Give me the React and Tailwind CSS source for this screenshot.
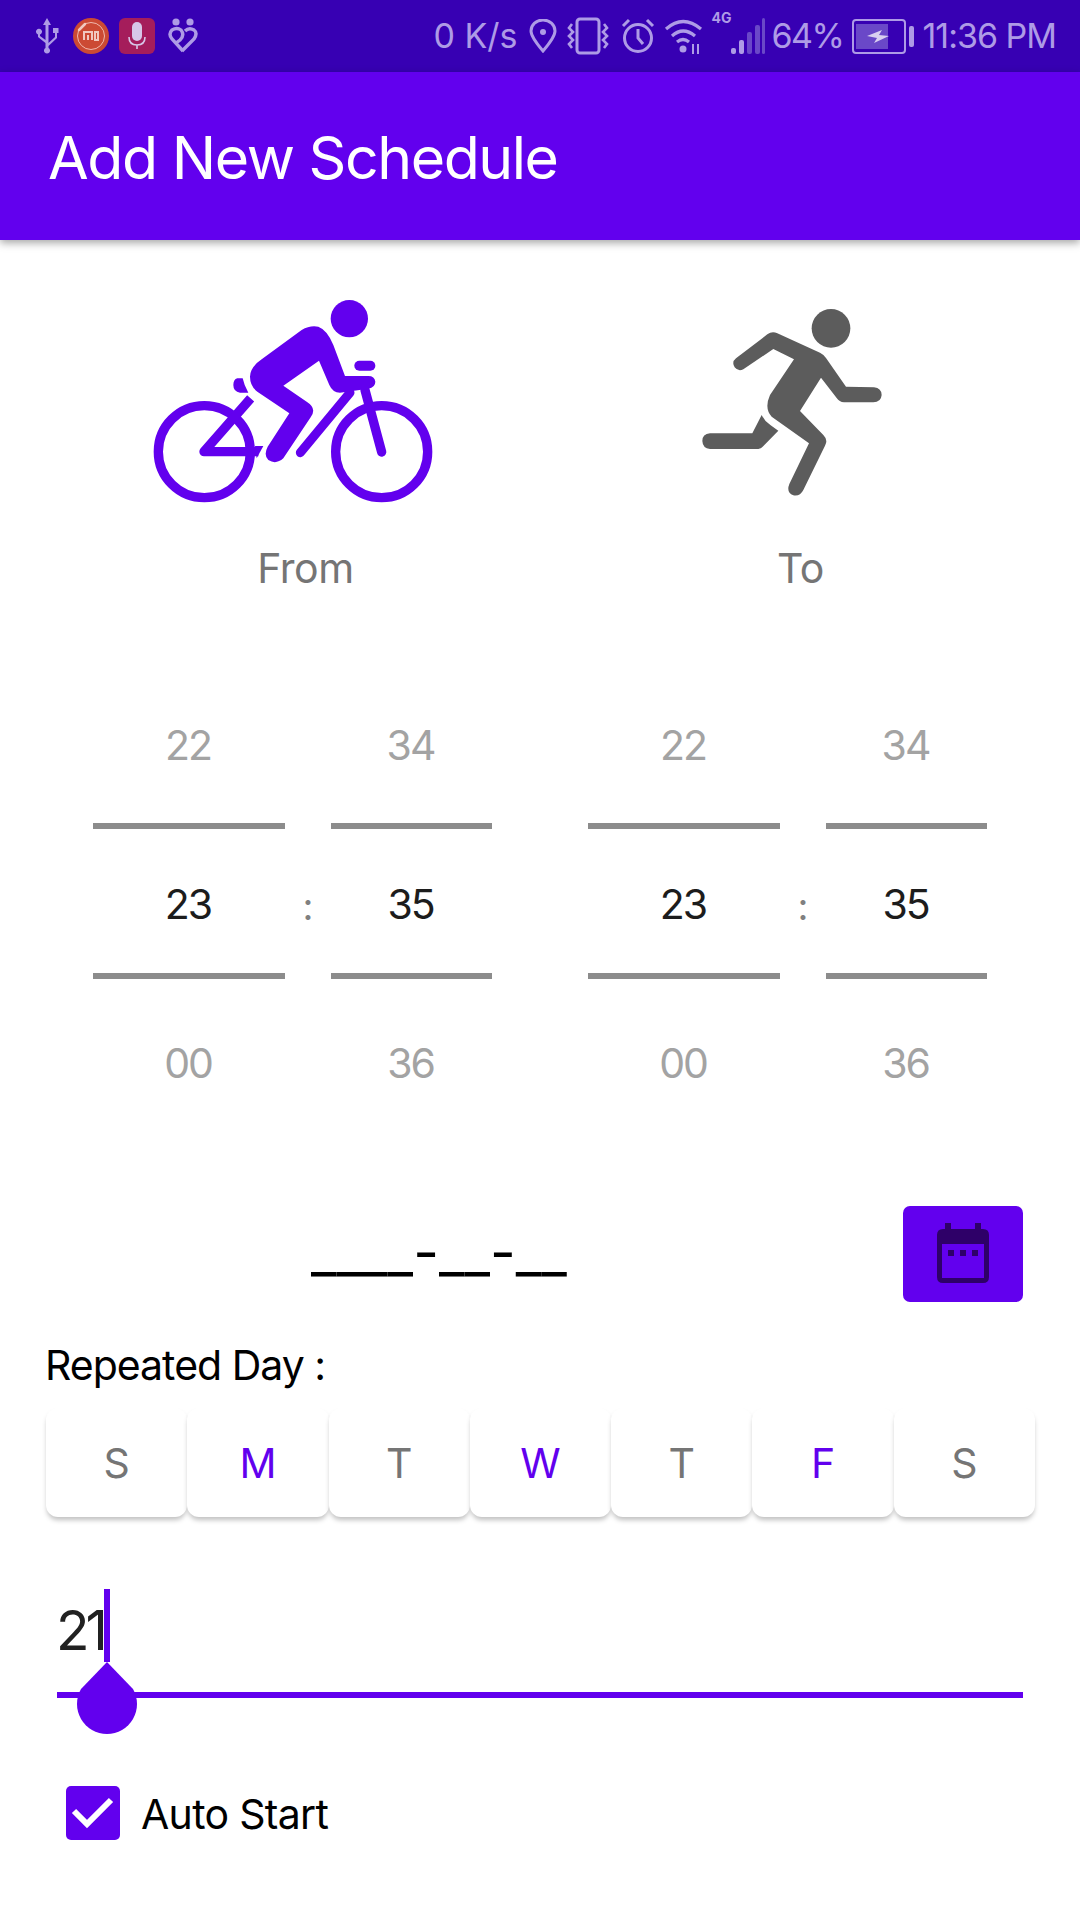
import React from 'react'

const PURPLE = '#6200ee'

function BikeIcon() {
  return (
    <svg width="340" height="260" viewBox="0 0 1020 780" className="block">
      <g fill="none" stroke={PURPLE} strokeLinecap="round" strokeLinejoin="round">
        <circle cx="253" cy="545" r="138" strokeWidth="28" />
        <circle cx="785" cy="545" r="138" strokeWidth="28" />
        <path d="M392 385 L252 545 H415" strokeWidth="28" strokeLinecap="butt" />
        <path d="M690 368 L541 548" strokeWidth="27" />
        <path d="M735 360 L785 546" strokeWidth="28" />
      </g>
      <path d="M352 325 H368 Q372 345 385 368 L372 368 H360 Q340 365 340 345 Q340 328 352 325 Z" fill={PURPLE} />
      <path d="M405 528 H430 L410 565 Z" fill={PURPLE} />
      <circle cx="688" cy="146" r="56" fill={PURPLE} />
      <rect x="703" y="272" width="63" height="30" rx="15" fill={PURPLE} />
      <path
        d="M545 180 L425 268 Q390 292 390 320 Q390 348 412 365 L508 430 L443 530 Q430 555 445 570 Q468 585 490 565 L572 442 Q592 415 560 395 L490 347 L597 272 L628 345 Q638 368 660 368 L745 356 Q766 352 766 335 Q764 318 745 318 L675 318 L640 225 Q622 180 595 170 Q570 165 545 180 Z"
        fill={PURPLE}
      />
    </svg>
  )
}

function RunIcon() {
  return (
    <svg width="260" height="240" viewBox="0 0 780 720" className="block" fill="#5c5c5c">
      <circle cx="513" cy="145" r="58" />
      <path d="M228 235 L322 163 Q336 153 352 160 L480 218 Q492 224 498 234 L558 320 L642 322 Q665 325 665 345 Q663 367 640 367 L552 367 Q538 366 530 354 L483 293 L420 393 L490 465 Q505 480 495 497 L430 630 Q420 650 400 646 Q378 638 388 612 L447 490 L335 410 Q312 385 330 345 L402 238 L340 207 L250 268 Q235 276 224 262 Q214 246 228 235 Z" />
      <path d="M305 405 L277 460 L150 460 Q127 462 127 483 Q128 505 150 507 L295 507 Q303 506 308 500 L355 452 L332 436 Q314 424 305 405 Z" />
    </svg>
  )
}

function CalendarIcon() {
  return (
    <svg width="54" height="62" viewBox="0 0 54 62" className="block">
      <path
        fillRule="evenodd"
        fill="#2e0068"
        d="M9 0 H15 V6 H39 V0 H45 V6 H47 Q53 6 53 12 V54 Q53 60 47 60 H7 Q1 60 1 54 V12 Q1 6 7 6 H9 Z M6 21 V55 H48 V21 Z"
      />
      <rect x="12" y="27" width="6" height="6" fill="#2e0068" />
      <rect x="24" y="27" width="6" height="6" fill="#2e0068" />
      <rect x="36" y="27" width="6" height="6" fill="#2e0068" />
    </svg>
  )
}

function LeftStatusIcons() {
  const c = '#ae9be6'
  return (
    <div className="flex items-center">
      <svg width="24" height="36" viewBox="0 0 24 36" className="ml-[35px]" fill={c}>
        <path d="M12 0 L16 7 H13.5 V25 L20 19 V15 H18 V10 H23.5 V15 H22 V20 L13.5 28 V30 A3 3 0 1 1 10.5 30 V25 L3 19 V16.5 A3 3 0 1 1 5 16.5 V18 L10.5 22 V7 H8 Z" />
      </svg>
      <svg width="36" height="36" viewBox="0 0 36 36" className="ml-[14px]">
        <circle cx="18" cy="18" r="18" fill="#cc4a33" />
        <circle cx="18" cy="18" r="13.5" fill="none" stroke="#f0b9ad" strokeWidth="1" />
        <path d="M6 12 L12 6" stroke="#f0c8bf" strokeWidth="2.5" strokeLinecap="round" />
        <path d="M11 22 V14 H19 V22 M15 17 V22 M22 14 H25 V22 H22 Z" fill="none" stroke="#f0c8bf" strokeWidth="2" />
      </svg>
      <svg width="36" height="36" viewBox="0 0 36 36" className="ml-[10px]">
        <rect width="36" height="36" rx="6" fill="#a51d5b" />
        <rect x="13" y="4" width="10" height="19" rx="5" fill="#d7c6e8" />
        <path d="M10 19 Q10 27 18 27 Q26 27 26 19 M18 27 V31" fill="none" stroke="#d7c6e8" strokeWidth="1.6" />
      </svg>
      <svg width="30" height="36" viewBox="0 0 30 36" className="ml-[13px]" fill="none" stroke={c} strokeWidth="3.4">
        <circle cx="8" cy="4" r="3.6" fill={c} stroke="none" />
        <circle cx="22" cy="4" r="3.6" fill={c} stroke="none" />
        <path d="M15 33 L4 21 Q0 16 4 12 Q9 9 13 12 Q17 17 12 22 L8 25" />
        <path d="M14 33 L26 21 Q30 15 26 12 Q21 9 17 13" />
      </svg>
    </div>
  )
}

function RightStatus() {
  const c = '#ae9be6'
  return (
    <div className="flex items-center text-[#ae9be6] text-[34px] leading-none mr-[24px]">
      <span>0 K/s</span>
      <svg width="28" height="34" viewBox="0 0 28 34" className="ml-[11px]" fill="none" stroke={c} strokeWidth="3">
        <path d="M14 32 Q2 18 2 12 A12 11 0 0 1 26 12 Q26 18 14 32 Z" />
        <circle cx="14" cy="13" r="3" fill={c} stroke="none" />
      </svg>
      <svg width="42" height="38" viewBox="0 0 42 38" className="ml-[10px]" fill="none" stroke={c} strokeWidth="2.6">
        <rect x="10" y="2" width="22" height="34" rx="3" strokeWidth="3" />
        <path d="M5 7 L2 11 L6 15 L2 19 L6 23 L2 27 L5 31 M37 7 L40 11 L36 15 L40 19 L36 23 L40 27 L37 31" />
      </svg>
      <svg width="34" height="36" viewBox="0 0 34 36" className="ml-[12px]" fill="none" stroke={c} strokeWidth="3">
        <circle cx="17" cy="20" r="13.5" />
        <path d="M17 11 V20 L22 26 M2 8 L8 2 M32 8 L26 2" />
      </svg>
      <svg width="40" height="36" viewBox="0 0 40 36" className="ml-[9px]" fill="none" stroke={c} strokeWidth="3.2">
        <path d="M2 11 Q19 -4 37 11 M8 18 Q19 8 31 18 M13 24 Q19 19 25 24" />
        <circle cx="19" cy="31" r="3.5" fill={c} stroke="none" />
        <path d="M29 26 V36 M34 26 V36" strokeWidth="2" />
      </svg>
      <div className="ml-[8px] w-[20px] self-start mt-[-6px] text-[14px] font-bold leading-none">4G</div>
      <svg width="34" height="36" viewBox="0 0 34 36" className="ml-[-1px]">
        <rect x="0" y="30" width="5" height="6" rx="2" fill={c} />
        <rect x="8" y="22" width="5" height="14" rx="2" fill={c} />
        <rect x="16" y="14" width="5" height="22" rx="2" fill="#6a48c8" />
        <rect x="24" y="7" width="5" height="29" rx="2" fill="#6a48c8" />
        <rect x="31" y="0" width="3" height="36" rx="1.5" fill="#6a48c8" />
      </svg>
      <span className="ml-[7px] tracking-[-1.5px]">64%</span>
      <svg width="62" height="36" viewBox="0 0 62 36" className="ml-[9px]">
        <rect x="1" y="2" width="52" height="33" rx="3" fill="none" stroke={c} strokeWidth="2" />
        <rect x="4" y="6" width="32" height="25" fill="#6a48c8" />
        <path d="M15 18 L30 12 L27 17 L37 18 L22 25 L25 20 Z" fill="#d9cff0" />
        <rect x="57" y="8" width="5" height="21" rx="2" fill={c} />
      </svg>
      <span className="ml-[8px] tracking-[-1px]">11:36 PM</span>
    </div>
  )
}

function TimePicker() {
  const Wheel = ({ top, mid, bottom, width }) => (
    <div className={`flex flex-col text-center text-[41px] leading-[40px] tracking-[-2px] ${width}`}>
      <div className="h-[128px] pt-[30px] pr-[2px] text-[#a3a3a3]">{top}</div>
      <div className="h-[6px] bg-[#8c8c8c]" />
      <div className="h-[144px] pt-[55px] pr-[2px] text-[#1c1c1c]">{mid}</div>
      <div className="h-[6px] bg-[#8c8c8c]" />
      <div className="pt-[64px] pr-[2px] text-[#a3a3a3]">{bottom}</div>
    </div>
  )
  return (
    <div className="flex ml-[35px]">
      <Wheel width="w-[192px]" top="22" mid="23" bottom="00" />
      <div className="w-[46px] text-center text-[38px] leading-[40px] text-[#808080] pt-[191px]">:</div>
      <Wheel width="w-[161px]" top="34" mid="35" bottom="36" />
    </div>
  )
}

export default function App() {
  const days = [
    { label: 'S' },
    { label: 'M', on: true },
    { label: 'T' },
    { label: 'W', on: true },
    { label: 'T' },
    { label: 'F', on: true },
    { label: 'S' },
  ]

  return (
    <div className="w-[1080px] h-[1920px] bg-white overflow-hidden flex flex-col" style={{ fontFamily: 'Inter, sans-serif' }}>
      <div className="h-[72px] bg-[#3700b3] flex items-center justify-between">
        <LeftStatusIcons />
        <RightStatus />
      </div>
      <div className="h-[168px] bg-[#6200ee] flex items-center pl-[48px] pt-[4px] text-white text-[59px] tracking-[-1.45px] shadow-[0_3px_8px_rgba(0,0,0,0.35)]">
        Add New Schedule
      </div>

      <div className="grid grid-cols-[495px_495px] pl-[58px] pt-[30px]">
        <div>
          <div className="ml-[62px] h-[260px]"><BikeIcon /></div>
          <div className="text-center text-[41px] leading-none tracking-[-0.5px] text-[#757575] mt-[18px]">From</div>
        </div>
        <div>
          <div className="ml-[107px] mt-[10px] h-[250px]"><RunIcon /></div>
          <div className="text-center text-[41px] leading-none tracking-[-0.5px] text-[#757575] mt-[18px]">To</div>
        </div>
      </div>

      <div className="grid grid-cols-[495px_495px] pl-[58px] mt-[106px]">
        <TimePicker />
        <TimePicker />
      </div>

      <div className="flex items-center mt-[123px] h-[96px] pl-[311px] pr-[57px] justify-between">
        <span className="text-[56px] leading-none text-black mb-[4px]">____-__-__</span>
        <button className="w-[120px] h-[96px] bg-[#6200ee] rounded-[7px] flex items-center justify-center">
          <CalendarIcon />
        </button>
      </div>

      <div className="pl-[45px] mt-[43px] text-[41px] leading-none tracking-[-1px] text-black">Repeated Day :</div>

      <div className="grid grid-cols-7 mx-[46px] w-[989px] mt-[22px]">
        {days.map((d, i) => (
          <div
            key={i}
            className={`h-[109px] pt-[3px] rounded-[12px] bg-white shadow-[0_4px_5px_-1px_rgba(0,0,0,0.25)] flex items-center justify-center text-[41px] ${d.on ? 'text-[#6200ee]' : 'text-[#757575]'}`}
          >
            {d.label}
          </div>
        ))}
      </div>

      <div className="relative mx-[57px] w-[966px] h-[173px] mt-[72px]">
        <div className="h-[73px]">
          <span className="block text-[55px] leading-none tracking-[-4px] text-[#212121] pt-[14px] ml-[-1px]">21</span>
        </div>
        <div className="absolute left-[47px] top-0 w-[6px] h-[73px] bg-[#6200ee]" />
        <div className="h-[6px] bg-[#6200ee] mt-[30px]" />
        <svg width="60" height="72" viewBox="0 0 60 72" className="absolute left-[20px] top-[73px]">
          <path d="M30 0 L56 27 A30 30 0 1 1 4 27 Z" fill="#6200ee" />
        </svg>
      </div>

      <div className="flex items-center pl-[66px] mt-[24px]">
        <div className="w-[54px] h-[54px] bg-[#6200ee] rounded-[5px] flex items-center justify-center">
          <svg width="44" height="36" viewBox="0 0 44 36" fill="none" stroke="white" strokeWidth="6">
            <path d="M3 16 L16 29 L40 5" />
          </svg>
        </div>
        <span className="ml-[21px] mt-[2px] text-[41px] leading-none tracking-[-0.7px] text-black">Auto Start</span>
      </div>
    </div>
  )
}
